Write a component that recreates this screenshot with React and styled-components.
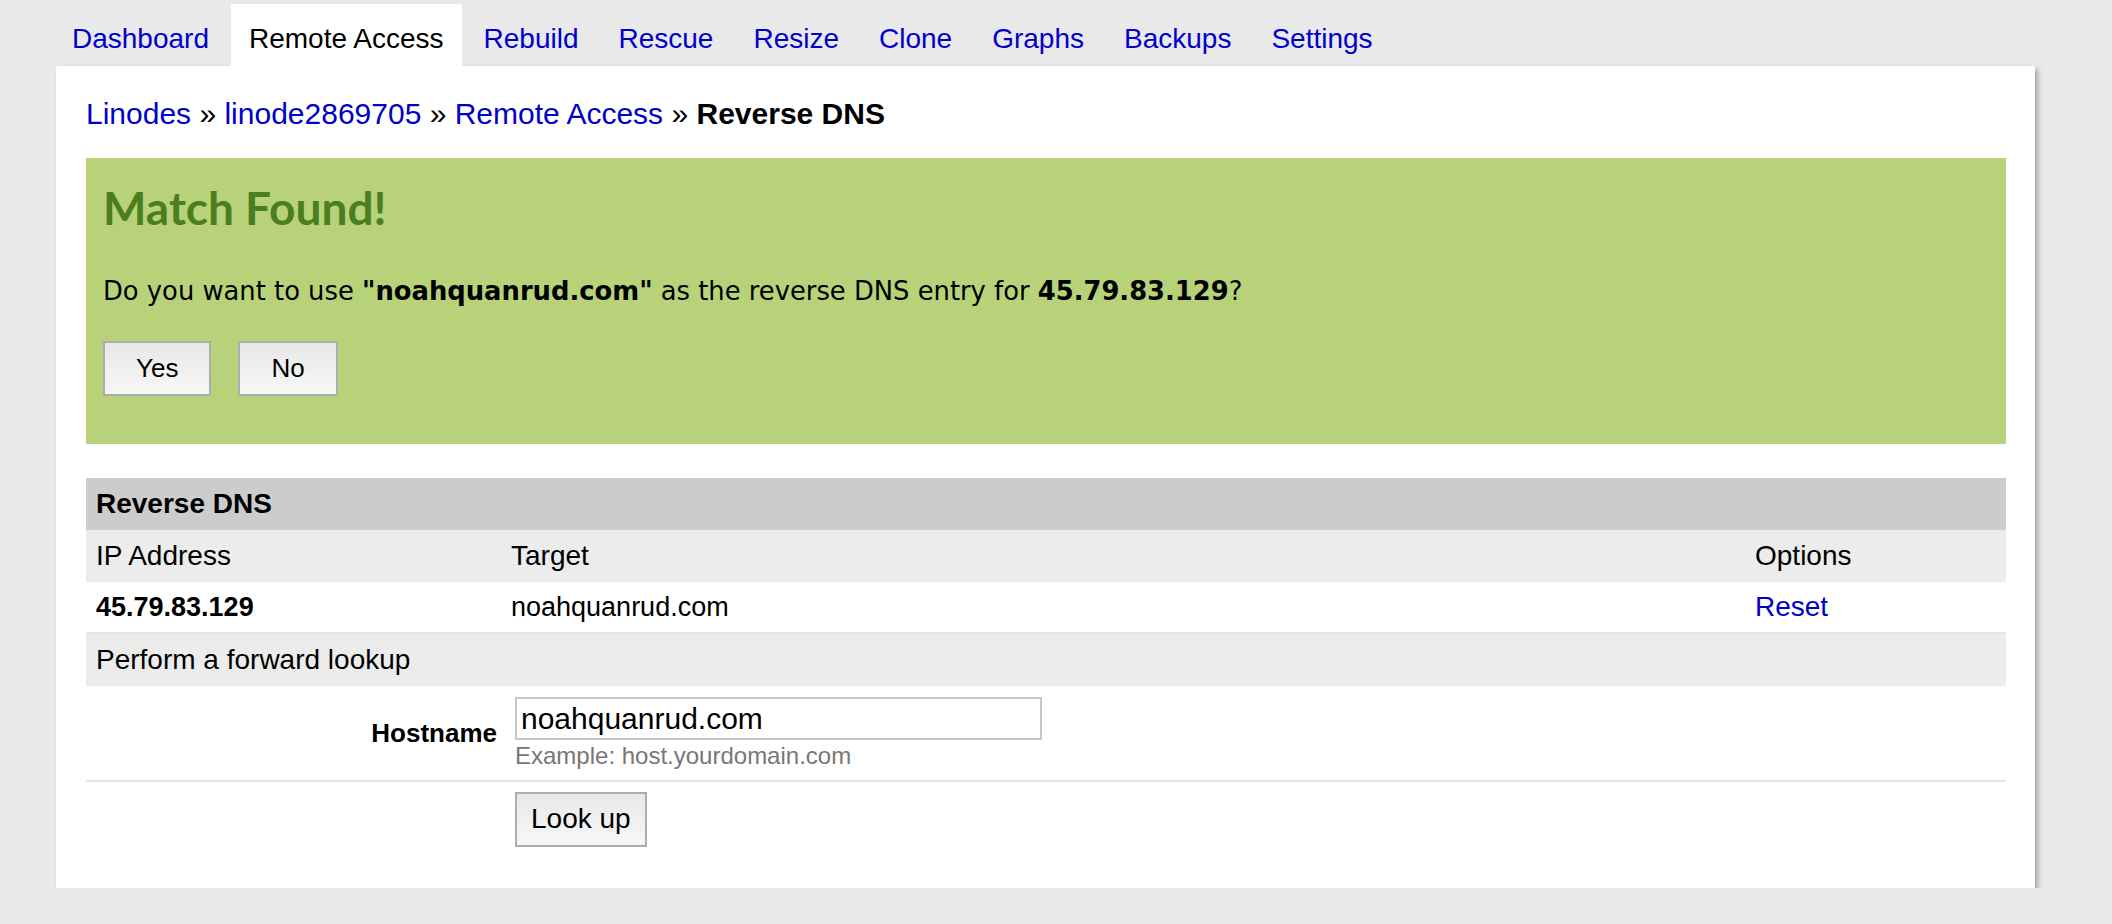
import React from "react";
import styled, { createGlobalStyle } from "styled-components";

const GlobalStyle = createGlobalStyle`
  html, body { margin: 0; padding: 0; }
  body {
    background: #e9e9e9;
    font-family: "Liberation Sans", Arial, Helvetica, sans-serif;
    color: #000;
  }
`;

const Page = styled.div`
  padding: 4px 0 0 56px;
`;

const Tabs = styled.nav`
  display: flex;
  height: 62px;
  margin-left: -4px;
`;

const Tab = styled.a`
  display: block;
  margin: 0 2px;
  padding: 7px 18px 0;
  line-height: 55px;
  font-size: 28px;
  text-decoration: none;
  color: ${(p) => (p.$active ? "#000" : "#0000cc")};
  background: ${(p) => (p.$active ? "#fff" : "transparent")};
`;

const Panel = styled.main`
  box-sizing: border-box;
  width: 1979px;
  background: #fff;
  padding: 31px 29px 30px 30px;
  box-shadow: 3px 3px 5px rgba(0, 0, 0, 0.28);
`;

const Breadcrumb = styled.div`
  font-size: 30px;
  line-height: 34.5px;
  margin-bottom: 26.5px;
`;

const Crumb = styled.a`
  color: #0000cc;
  text-decoration: none;
`;

const Current = styled.strong`
  font-weight: bold;
`;

const MatchBox = styled.section`
  background: #b8d27a;
  padding: 22px 17px 48px;
`;

const MatchTitle = styled.h2`
  margin: 0;
  font-family: Lato, "Open Sans", sans-serif;
  font-weight: bold;
  font-size: 46px;
  line-height: 56px;
  color: #4a7e1e;
`;

const Question = styled.p`
  margin: 40px 0 0;
  font-family: "DejaVu Sans", Verdana, sans-serif;
  font-size: 25.8px;
  line-height: 31px;
  color: #000;
`;

const ButtonRow = styled.div`
  display: flex;
  gap: 27px;
  margin-top: 34px;
`;

const Button = styled.button`
  box-sizing: border-box;
  height: 55px;
  padding: 0 ${(p) => p.$pad || 31}px;
  border: 2px solid #adadad;
  border-radius: 0;
  background: linear-gradient(#e8e8e8, #f7f7f7);
  font-family: "Liberation Sans", Arial, sans-serif;
  font-size: ${(p) => p.$size || 26}px;
  color: #000;
  cursor: pointer;
`;

const Table = styled.div`
  margin-top: 34px;
  display: grid;
  grid-template-columns: 415px 1fr 261px;
  font-size: 28px;
`;

const HeaderRow = styled.div`
  grid-column: 1 / -1;
  height: 52px;
  display: flex;
  align-items: center;
  padding-left: 10px;
  background: #cccccc;
  font-weight: bold;
`;

const Cell = styled.div`
  display: flex;
  align-items: center;
  box-sizing: border-box;
  height: ${(p) => p.$h}px;
  padding-left: 10px;
  background: ${(p) => p.$bg || "#fff"};
  font-weight: ${(p) => (p.$bold ? "bold" : "normal")};
  font-size: ${(p) => p.$size || 28}px;
  border-bottom: ${(p) => (p.$line ? "2px solid #e4e4e4" : "none")};
`;

const SpanCell = styled(Cell)`
  grid-column: 1 / -1;
`;

const ResetLink = styled.a`
  color: #0000cc;
  text-decoration: none;
`;

const FormRow = styled.div`
  grid-column: 1 / -1;
  display: grid;
  grid-template-columns: 415px 1fr;
  padding: ${(p) => p.$pad};
  border-bottom: ${(p) => (p.$line ? "2px solid #e5e5e5" : "none")};
`;

const Label = styled.label`
  align-self: center;
  text-align: right;
  padding-right: 4px;
  font-size: 26px;
  font-weight: bold;
`;

const Field = styled.div`
  padding-left: 14px;
  display: flex;
  flex-direction: column;
  align-items: flex-start;
`;

const Input = styled.input`
  box-sizing: border-box;
  width: 527px;
  height: 43px;
  margin: 0;
  padding: 0 4px;
  border: 2px solid #c6c6c6;
  font-family: "Liberation Sans", Arial, sans-serif;
  font-size: 30px;
  color: #000;
  outline: none;
`;

const Hint = styled.div`
  margin-top: 2px;
  font-size: 24px;
  line-height: 27.6px;
  color: #777;
`;

const tabs = [
  "Dashboard",
  "Remote Access",
  "Rebuild",
  "Rescue",
  "Resize",
  "Clone",
  "Graphs",
  "Backups",
  "Settings",
];

export default function App() {
  return (
    <>
      <GlobalStyle />
      <Page>
        <Tabs>
          {tabs.map((t) => (
            <Tab key={t} href="#" $active={t === "Remote Access"}>
              {t}
            </Tab>
          ))}
        </Tabs>
        <Panel>
          <Breadcrumb>
            <Crumb href="#">Linodes</Crumb> » <Crumb href="#">linode2869705</Crumb> »{" "}
            <Crumb href="#">Remote Access</Crumb> » <Current>Reverse DNS</Current>
          </Breadcrumb>

          <MatchBox>
            <MatchTitle>Match Found!</MatchTitle>
            <Question>
              Do you want to use <b>"noahquanrud.com"</b> as the reverse DNS entry for{" "}
              <b>45.79.83.129</b>?
            </Question>
            <ButtonRow>
              <Button>Yes</Button>
              <Button>No</Button>
            </ButtonRow>
          </MatchBox>

          <Table>
            <HeaderRow>Reverse DNS</HeaderRow>
            <Cell $h={52} $bg="#ececec">IP Address</Cell>
            <Cell $h={52} $bg="#ececec">Target</Cell>
            <Cell $h={52} $bg="#ececec">Options</Cell>
            <Cell $h={52} $bold $size={27} $line>45.79.83.129</Cell>
            <Cell $h={52} $size={27} $line>noahquanrud.com</Cell>
            <Cell $h={52} $line>
              <ResetLink href="#">Reset</ResetLink>
            </Cell>
            <SpanCell $h={52} $bg="#ececec">Perform a forward lookup</SpanCell>
            <FormRow $pad="11px 0 10px" $line>
              <Label htmlFor="hostname">Hostname</Label>
              <Field>
                <Input id="hostname" defaultValue="noahquanrud.com" />
                <Hint>Example: host.yourdomain.com</Hint>
              </Field>
            </FormRow>
            <FormRow $pad="10px 0 11px">
              <span />
              <Field>
                <Button $pad={14} $size={28}>Look up</Button>
              </Field>
            </FormRow>
          </Table>
        </Panel>
      </Page>
    </>
  );
}
